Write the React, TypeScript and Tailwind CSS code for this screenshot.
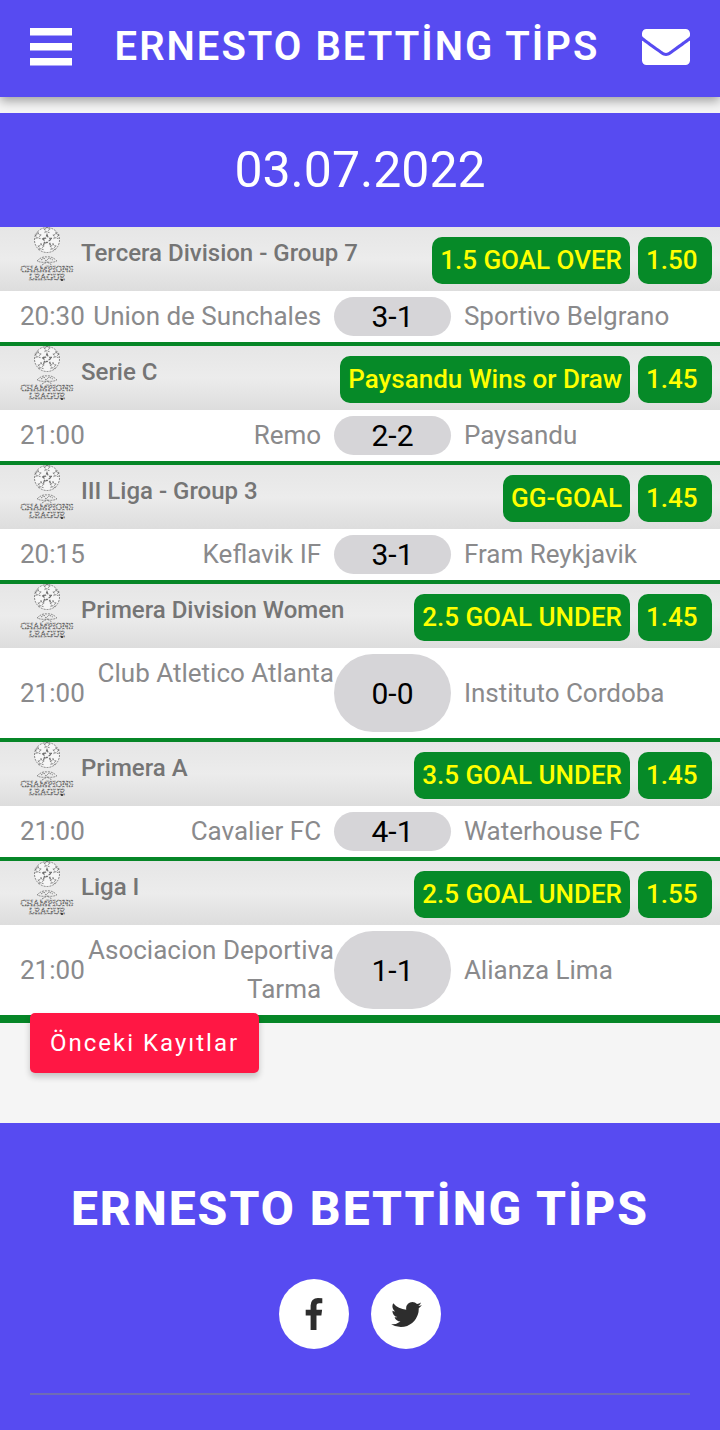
import { FaEnvelope } from "react-icons/fa";

type Match = {
  league: string;
  tip: string;
  odds: string;
  time: string;
  home: string;
  away: string;
  score: string;
};

const matches: Match[] = [
  { league: "Tercera Division - Group 7", tip: "1.5 GOAL OVER", odds: "1.50", time: "20:30", home: "Union de Sunchales", away: "Sportivo Belgrano", score: "3-1" },
  { league: "Serie C", tip: "Paysandu Wins or Draw", odds: "1.45", time: "21:00", home: "Remo", away: "Paysandu", score: "2-2" },
  { league: "III Liga - Group 3", tip: "GG-GOAL", odds: "1.45", time: "20:15", home: "Keflavik IF", away: "Fram Reykjavik", score: "3-1" },
  { league: "Primera Division Women", tip: "2.5 GOAL UNDER", odds: "1.45", time: "21:00", home: "Club Atletico Atlanta", away: "Instituto Cordoba", score: "0-0" },
  { league: "Primera A", tip: "3.5 GOAL UNDER", odds: "1.45", time: "21:00", home: "Cavalier FC", away: "Waterhouse FC", score: "4-1" },
  { league: "Liga I", tip: "2.5 GOAL UNDER", odds: "1.55", time: "21:00", home: "Asociacion Deportiva Tarma", away: "Alianza Lima", score: "1-1" },
];

const STAR = "M0 -3.6 L0.9 -1.2 L3.4 -1.1 L1.4 0.5 L2.1 2.9 L0 1.5 L-2.1 2.9 L-1.4 0.5 L-3.4 -1.1 L-0.9 -1.2 Z";

function LeagueLogo() {
  return (
    <svg width="56" height="56" viewBox="0 0 56 56" fill="none" className="shrink-0" aria-hidden="true">
      {/* star ball */}
      <circle cx="27" cy="13" r="12.5" fill="#f6f6f6" />
      <g stroke="#6b6b6b" strokeWidth="0.8" strokeDasharray="2 1">
        <circle cx="27" cy="13" r="12.5" />
        <path d={STAR} transform="translate(27 13) scale(1.5)" />
        <path d={STAR} transform="translate(27 3)" />
        <path d={STAR} transform="translate(18 9)" />
        <path d={STAR} transform="translate(36 9)" />
        <path d={STAR} transform="translate(21 20)" />
        <path d={STAR} transform="translate(33 20)" />
      </g>
      {/* crest */}
      <g stroke="#777777" strokeWidth="0.9" strokeDasharray="2 1">
        <path d="M17 34 Q22 29 27 30 Q32 29 37 34 Q32 36 27 35 Q22 36 17 34 Z" />
        <path d="M21 33 L24 31 L26 34 L29 31 L33 33" />
        <path d="M22 38 L27 35 L32 38" />
      </g>
      <g fontFamily="Liberation Serif, serif" fontSize="9" fill="none" stroke="#606060" strokeWidth="0.6" strokeDasharray="2 1" textAnchor="middle">
        <text x="27" y="45">CHAMPIONS</text>
        <text x="27" y="53">LEAGUE</text>
      </g>
      <circle cx="42" cy="53" r="1" fill="#222222" />
    </svg>
  );
}

function MatchCard({ m }: { m: Match }) {
  return (
    <article className="border-b-4 border-[#068627] last:border-b-8">
      <div className="flex h-16 items-start bg-linear-to-b from-[#e6e6e6] via-[#ececec] to-[#dddddd] pr-2 pl-5">
        <LeagueLogo />
        <h2 className="ml-[5px] grow pt-2 text-[24px] leading-9 font-medium text-[#757575]">{m.league}</h2>
        <div className="flex gap-2 pt-[10px] text-[26px] leading-[39px] font-medium text-[#ffff00]">
          <span className="rounded-[10px] bg-[#068a28] px-2 py-1">{m.tip}</span>
          <span className="rounded-[10px] bg-[#068a28] px-2 py-1">{m.odds}&nbsp;</span>
        </div>
      </div>
      <div className="grid grid-cols-[67fr_247fr_117fr_269fr] items-stretch bg-white py-[6px] pl-5 text-[26px] leading-[39px] text-[#8a8a8c]">
        <time className="self-center">{m.time}</time>
        <div className="text-right">{m.home} &nbsp;</div>
        <div className="flex items-center justify-center rounded-[40px] bg-[#d6d5d8] text-[30px] text-black">
          {m.score}
        </div>
        <div className="self-center">&nbsp;&nbsp;{m.away}</div>
      </div>
    </article>
  );
}

export default function App() {
  return (
    <div className="bg-[#f5f5f5] font-[Roboto,sans-serif]">
      <header className="relative flex h-[97px] items-center justify-between bg-[#574bf1] px-[30px] pb-[3px] text-white shadow-[0_4px_10px_rgba(0,0,0,0.35)]">
        <button type="button" aria-label="Menu">
          <svg width="42" height="38" viewBox="0 0 42 38" fill="currentColor">
            <rect y="0" width="42" height="7.5" />
            <rect y="15" width="42" height="7.5" />
            <rect y="30" width="42" height="7.5" />
          </svg>
        </button>
        <h1 className="text-[40px] leading-[60px] font-semibold tracking-[2px]">ERNESTO BETTİNG TİPS</h1>
        <a href="#contact" aria-label="Mail">
          <FaEnvelope className="size-12" />
        </a>
      </header>

      <main className="pt-4">
        <div className="bg-[#574bf1] py-[27px] text-center text-[50px] leading-[60px] text-white">03.07.2022</div>
        <section>
          {matches.map((m) => (
            <MatchCard key={m.league} m={m} />
          ))}
        </section>
        <div className="-mt-[10px] px-[30px] pb-[50px]">
          <button
            type="button"
            className="relative block h-[60px] rounded-[5px] bg-[#ff1744] px-5 text-[24px] tracking-[2px] text-white shadow-[0_4px_6px_rgba(0,0,0,0.2)]"
          >
            Önceki Kayıtlar
          </button>
        </div>
      </main>

      <footer className="bg-[#574bf1] px-[30px] pt-[50px] pb-9 text-white">
        <h2 className="text-center text-[48px] leading-[72px] font-extrabold tracking-[2px]">ERNESTO BETTİNG TİPS</h2>
        <div className="mt-[34px] flex justify-center gap-[22px] text-[#2d2d2d]">
          <a href="#facebook" aria-label="Facebook" className="flex size-[70px] items-center justify-center rounded-full bg-white">
            <svg width="18" height="32" viewBox="95 0 864 1664" fill="currentColor">
              <path d="M959 12v264h-157q-86 0-116 36t-30 108v189h293l-39 296h-254v759h-306v-759h-255v-296h255v-218q0-186 104-288.5t277-102.5q147 0 228 12z" />
            </svg>
          </a>
          <a href="#twitter" aria-label="Twitter" className="flex size-[70px] items-center justify-center rounded-full bg-white">
            <svg width="35" height="35" viewBox="0 0 1792 1792" fill="currentColor">
              <path d="M1684 408q-67 98-162 167 1 14 1 42 0 130-38 259.5t-115.5 248.5-184.5 210.5-258 146-323 54.5q-271 0-496-145 35 4 78 4 225 0 401-138-105-2-188-64.5t-114-159.5q33 5 61 5 43 0 85-11-112-23-185.5-111.5t-73.5-205.5v-4q68 38 146 41-66-44-105-115t-39-154q0-88 44-163 121 149 294.5 238.5t371.5 99.5q-8-38-8-74 0-134 94.5-228.5t228.5-94.5q140 0 236 102 109-21 205-78-37 115-142 178 93-10 186-50z" />
            </svg>
          </a>
        </div>
        <hr className="mt-11 border-t-2 border-[#6f6cb4]" />
      </footer>
    </div>
  );
}
